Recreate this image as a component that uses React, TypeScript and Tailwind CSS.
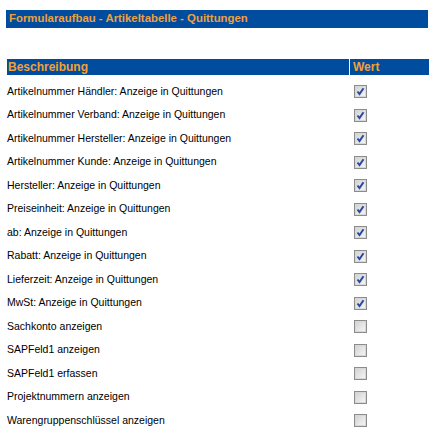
import { useState } from "react";

const rows: { label: string; checked: boolean }[] = [
  { label: "Artikelnummer Händler: Anzeige in Quittungen", checked: true },
  { label: "Artikelnummer Verband: Anzeige in Quittungen", checked: true },
  { label: "Artikelnummer Hersteller: Anzeige in Quittungen", checked: true },
  { label: "Artikelnummer Kunde: Anzeige in Quittungen", checked: true },
  { label: "Hersteller: Anzeige in Quittungen", checked: true },
  { label: "Preiseinheit: Anzeige in Quittungen", checked: true },
  { label: "ab: Anzeige in Quittungen", checked: true },
  { label: "Rabatt: Anzeige in Quittungen", checked: true },
  { label: "Lieferzeit: Anzeige in Quittungen", checked: true },
  { label: "MwSt: Anzeige in Quittungen", checked: true },
  { label: "Sachkonto anzeigen", checked: false },
  { label: "SAPFeld1 anzeigen", checked: false },
  { label: "SAPFeld1 erfassen", checked: false },
  { label: "Projektnummern anzeigen", checked: false },
  { label: "Warengruppenschlüssel anzeigen", checked: false },
];

const CheckBox = ({ checked, onClick }: { checked: boolean; onClick: () => void }) => (
  <span
    onClick={onClick}
    className="flex h-[13px] w-[13px] items-center justify-center border border-[#8c8c8c] bg-gradient-to-br from-[#d0d0d0] to-[#f8f8f8] shadow-[inset_0_0_0_1px_#d8d8d8]"
  >
    {checked && (
      <svg width="9" height="9" viewBox="0 0 9 9">
        <path d="M1.5 4.5 L3.5 7 L7.5 1.2" fill="none" stroke="#2a48a0" strokeWidth="2" />
      </svg>
    )}
  </span>
);

const App = () => {
  const [values, setValues] = useState(rows.map((r) => r.checked));

  return (
    <div className="h-[448px] w-[434px] bg-white pt-[10px] font-['Liberation_Sans',Arial,sans-serif] text-[10.5px] text-black">
      <div className="mx-[6px] flex h-[18px] items-center bg-[#004c9f] px-[3px] text-[11.4px] font-bold text-[#eea040]">
        Formularaufbau - Artikeltabelle - Quittungen
      </div>

      <div className="ml-[7px] mr-[5px] mt-[31px] flex h-[16px] gap-px text-[12px] font-bold text-[#f5a030]">
        <div className="flex flex-1 items-center bg-[#004c9f] px-[1px]">Beschreibung</div>
        <div className="flex w-[79px] items-center bg-[#004c9f] px-[3px]">Wert</div>
      </div>

      <div className="ml-[7px] mr-[5px] mt-[5px] flex flex-col">
        {rows.map((row, i) => (
          <div key={row.label} className="flex h-[23.5px] items-center">
            <div className="flex-1">{row.label}</div>
            <div className="flex w-[79px] items-center pl-[4px]">
              <CheckBox
                checked={values[i]}
                onClick={() => setValues(values.map((v, j) => (j === i ? !v : v)))}
              />
            </div>
          </div>
        ))}
      </div>
    </div>
  );
};

export default App;
